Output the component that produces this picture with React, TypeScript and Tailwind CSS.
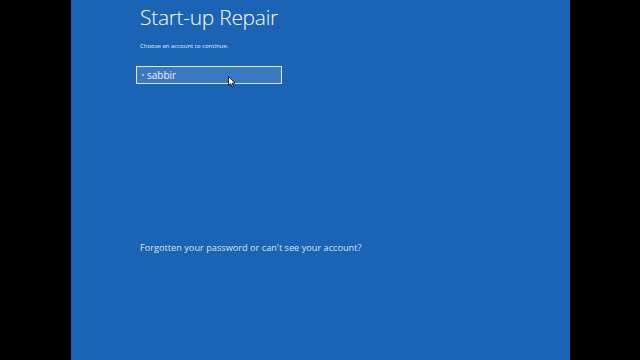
export default function App() {
  return (
    <div className="flex h-[360px] w-[640px] bg-black" style={{ fontFamily: '"Open Sans", "Liberation Sans", sans-serif' }}>
      <div className="ml-[71px] flex h-full w-[499px] flex-col bg-[#1b63b4] pl-[69px] text-white">
        <h1 className="mt-[2px] text-[21px] font-light leading-[30px] tracking-[-0.3px]">Start-up Repair</h1>
        <p className="mt-[10px] text-[6px] leading-[8px] text-[#e8eef8]">Choose an account to continue.</p>
        <div className="relative ml-[-4px] mt-[16px] flex h-[18px] w-[146px] items-center border border-[#dfe8f4] bg-[#3a78c1] pl-[5px]">
          <span className="h-[2px] w-[2px] rounded-full bg-[#cfdcf0]" />
          <span className="ml-[3px] text-[10px] leading-none text-[#eef3fa]">sabbir</span>
          <svg className="absolute left-[91px] top-[9px]" width="8" height="12" viewBox="0 0 8 12">
            <path d="M0.5 0.5 L0.5 9.5 L2.6 7.6 L4 11 L5.4 10.4 L4 7.2 L7 7.2 Z" fill="#fff" stroke="#000" strokeWidth="0.8" />
          </svg>
        </div>
        <p className="mt-[157px] text-[9.2px] leading-[14px] text-[#d6e3f4]">Forgotten your password or can't see your account?</p>
      </div>
    </div>
  );
}
